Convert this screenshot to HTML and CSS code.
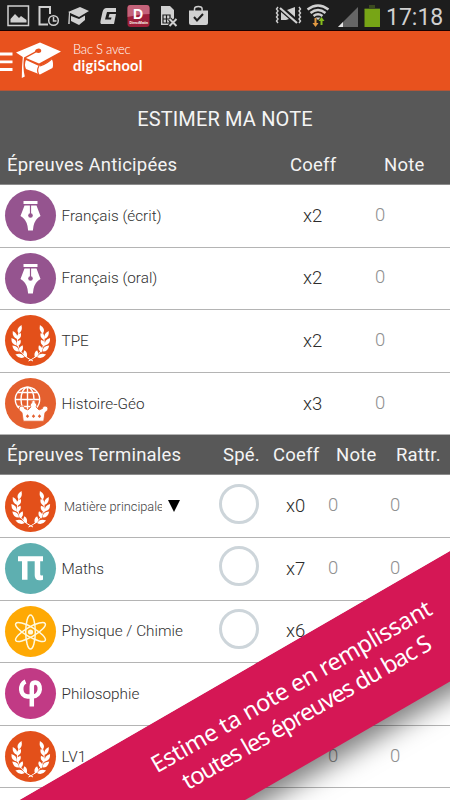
FILE: index.html
```
<!DOCTYPE html>
<html lang="fr">
<head>
    <meta charset="UTF-8">
    <meta name="viewport" content="width=device-width, initial-scale=1.0">
    <title>Bac S avec digiSchool</title>
    <link rel="stylesheet" href="styles.css">
</head>
<body>
    <!-- Shared subject icons -->
    <svg class="icon-defs" width="0" height="0">
        <symbol id="pen" viewBox="0 0 51 51">
            <path fill="#fff" d="M18.5 11h14v3h-14zM19.500 15.500h12l4 10.500q-5.500 3-7 10l-.6 4.500h-4.800l-.6-4.500q-1.500-7-7-10z"/>
            <path stroke="#95548f" stroke-width="1.200" d="M25.500 15v10"/>
            <circle cx="25.500" cy="25.500" r="2.300" fill="#95548f"/>
        </symbol>
        <symbol id="branch" viewBox="0 0 51 51" overflow="visible">
            <path fill="none" stroke="#fff" stroke-width="1" d="M14 18C10 27 13 39 28 46"/>
            <g fill="#fff">
                <path transform="translate(13.500 18.500) rotate(10)" d="M0 0Q4-3 1.500-9Q-4-4 0 0Z"/>
                <path transform="translate(12 24) rotate(-28)" d="M0 0Q3.500-4 0-9Q-3.500-4 0 0Z"/>
                <path transform="translate(12.500 25) rotate(14)" d="M0 0Q4-3.500 1.500-7.500Q-3.500-4 0 0Z"/>
                <path transform="translate(11.500 30.500) rotate(-34)" d="M0 0Q4-4 0-9Q-4-4 0 0Z"/>
                <path transform="translate(12 31.500) rotate(16)" d="M0 0Q4-3.500 1.500-7.500Q-3.500-4 0 0Z"/>
                <path transform="translate(14 36.500) rotate(-48)" d="M0 0Q4-4 0-9Q-4-4 0 0Z"/>
                <path transform="translate(15 37.500) rotate(8)" d="M0 0Q4-3.500 1.500-7.500Q-3.500-4 0 0Z"/>
                <path transform="translate(19.500 42) rotate(-74)" d="M0 0Q4-4 0-9.500Q-4-4 0 0Z"/>
                <path transform="translate(21.500 42.500) rotate(-28)" d="M0 0Q4-3.500 1.500-7.500Q-3.500-4 0 0Z"/>
            </g>
        </symbol>
        <symbol id="laurel" viewBox="0 0 51 51">
            <use href="#branch" width="51" height="51"/>
            <use href="#branch" width="51" height="51" transform="matrix(-1 0 0 1 51.500 0)"/>
        </symbol>
        <symbol id="globe" viewBox="0 0 51 51">
            <g fill="none" stroke="#fff" stroke-width="1.400">
                <circle cx="22.500" cy="21.500" r="12.200"/>
                <ellipse cx="22.500" cy="21.500" rx="6.500" ry="12.200"/>
                <path d="M22.500 9v25M10 21.500h25M12.500 14.500h20M12.500 28.500h20"/>
            </g>
            <path fill="#fff" stroke="#e4602f" stroke-width=".8" d="M18.300 43.200L17 34.500q-2.500-1-3-3.500 0-3 3-3 2.500 0 2.500 2.500l3.500 1.500 3-3q-1.500-2-.2-3.500l1-.5q-.7-2.500 1.700-2.700 2.400.2 1.700 2.700l1 .5q1.300 1.500-.2 3.500l3 3 3.500-1.500q0-2.500 2.500-2.500 3 0 3 3-.5 2.500-3 3.500l-1.300 8.700z"/>
            <path fill="#e4602f" d="M22.500 36.300l1.700 1.900-1.700 1.900-1.700-1.900zM28.500 36.300l1.700 1.900-1.700 1.900-1.700-1.900zM34.500 36.300l1.700 1.900-1.700 1.900-1.700-1.900z"/>
        </symbol>
        <symbol id="pi" viewBox="0 0 51 51">
            <path fill="#fff" d="M13 13.300h25v4.900h-2.800v13q0 1.800 2.800 1v4.500q-8.300 2.300-8.300-4.500v-14h-7.200v18.600h-5.500V18.200h-4z"/>
        </symbol>
        <symbol id="atom" viewBox="0 0 51 51">
            <g fill="none" stroke="#fff9df" stroke-width="1.500">
                <ellipse cx="25.500" cy="26" rx="4.800" ry="17"/>
                <ellipse cx="25.500" cy="26" rx="4.800" ry="17" transform="rotate(60 25.500 26)"/>
                <ellipse cx="25.500" cy="26" rx="4.800" ry="17" transform="rotate(120 25.500 26)"/>
            </g>
            <circle cx="25.500" cy="26" r="2.600" fill="#fff9df"/>
        </symbol>
        <symbol id="phi" viewBox="0 0 51 51">
            <path fill="none" stroke="#fff" stroke-width="4.500" d="M20.500 13.500c-6 2.500-6 14.500 2 15h5c9 0 9.500-14 2.500-14q-3.200 0-3.200 4v20"/>
        </symbol>
    </svg>

    <div class="screen">
        <div class="status-bar">
            <svg class="status-left" width="225" height="31" viewBox="0 0 225 31">
                <g fill="none" stroke="#d0d0d0" stroke-width="1.500">
                    <path d="M8 6h20.500v19.500H8z"/>
                    <path stroke-width="2" d="M50 14V7H39.500v17.500H48"/>
                    <circle cx="53.500" cy="20.500" r="4.800"/>
                    <path d="M53.500 17v4h3"/>
                    <path d="M194.500 11V9q0-2.500 3.800-2.500t3.800 2.500v2"/>
                </g>
                <g fill="#d0d0d0">
                    <path d="M10.500 22.500V19l4.500-5 4 4 2-2 5.500 4v2.500z"/>
                    <path d="M68 12l12-5 9 4-10 6zM71 16l8 3 6-3.500v4.500l-6 5-8-4zM70 13l-.3 11h-1.500l.8-12z"/>
                    <path d="M116 8v4h-9l-2 7.500h6l.5-2h-3l1-3.500h6.500l-2 10h-13q-1-1-.5-3l2-9q1-4 4-4z"/>
                    <path d="M161 6h9l4 4v8l-3 7h-10z"/>
                    <path d="M189 10.500h19V23q0 2-2 2h-15q-2 0-2-2z"/>
                </g>
                <path stroke="#1d1d1d" stroke-width="1.200" fill="none" d="M163 15h7v8h-7zM163 19h7M166.500 15v8"/>
                <path stroke="#1d1d1d" stroke-width="4" d="M169.500 19l7 7m0-7l-7 7"/>
                <path stroke="#d0d0d0" stroke-width="2" d="M169.500 19l7 7m0-7l-7 7"/>
                <path stroke="#1d1d1d" stroke-width="2" fill="none" d="M194 17l3 3.500 6-6.500"/>
                <rect x="127.500" y="5" width="22" height="22" rx="3" fill="#9d1f3a"/>
                <path fill="#c4637a" d="M127.500 17V8q0-3 3-3h16q3 0 3 3v6q-9 0-22 3z"/>
                <text class="app-letter" x="133" y="18.500">D</text>
                <text class="app-caption" x="129.500" y="24.200">DirectMatin</text>
            </svg>
            <svg class="status-right" width="110" height="31" viewBox="275 0 110 31">
                <g fill="none" stroke="#d0d0d0">
                    <path stroke-width="1.400" d="M278 7l-1.500 2 1.500 2-1.500 2 1.500 2-1.500 2 1.500 2-1.500 2 1.500 2M299 7l1.500 2-1.500 2 1.500 2-1.500 2 1.500 2-1.500 2 1.500 2-1.500 2"/>
                    <path stroke-width="2.200" d="M280 8l17 15"/>
                    <path stroke-width="2.400" d="M307.500 9.500q10.500-8 21 0M310.500 13q7.500-6 15 0M313.500 16q4.500-3.500 9 0"/>
                </g>
                <path fill="#d0d0d0" d="M281 12l8 7-3 1h-5zM287 10l8-3v10zM315.500 17.500h5L318 20z"/>
                <path fill="#e29a42" d="M314.500 18h2v5h2l-3 4-3-4h2z"/>
                <path fill="#86bd1d" d="M320.500 25h2v-4h2l-3-4-3 4h2z"/>
                <path fill="#666" d="M358 7v20h-20z"/>
                <path fill="#e4e4e4" d="M343 22v5h-5z"/>
                <path fill="#3b4a20" d="M369 5h6v3h5v2h-15.500V8h4.500z"/>
                <path fill="#77a516" d="M364.500 9H380v18h-15.500z"/>
            </svg>
            <span class="clock">17:18</span>
        </div>

        <div class="app-bar">
            <svg width="62" height="59" viewBox="0 0 62 59">
                <path stroke="#fff" stroke-width="2.800" d="M0 23h12.500M0 30.800h12.500M0 38.500h12.500"/>
                <path fill="#fff" d="M16 21.500L40 11.500l21 9-22 12-13-5.500 10-5.500q3 1 5-.5 1-3.500-2.500-3.500-3.500.5-3.500 3L24 26.500q-1.500 10 .8 19l-3 1.500q0-12 1-21z"/>
                <path fill="#fff" d="M26 29l13 6q8-3 12.500-7.500 2.500 4.500 1 9.500L40 43.500 26 38q-2-4.500 0-9z"/>
                <path fill="none" stroke="#e8521e" stroke-width="1.200" d="M39 35q-2.500 4-.5 8M40 35q8-3 12-7.500"/>
            </svg>
            <div class="brand">
                <span class="brand-light">Bac S avec</span>
                <span class="brand-bold">digiSchool</span>
            </div>
        </div>

        <h1>ESTIMER MA NOTE</h1>

        <div class="section-head early">
            <span>Épreuves Anticipées</span>
            <span>Coeff</span>
            <span>Note</span>
        </div>
        <div class="row early">
            <svg class="badge purple"><use href="#pen"/></svg>
            <span class="name">Français (écrit)</span>
            <span class="coeff">x2</span>
            <span class="note">0</span>
        </div>
        <div class="row early">
            <svg class="badge purple"><use href="#pen"/></svg>
            <span class="name">Français (oral)</span>
            <span class="coeff">x2</span>
            <span class="note">0</span>
        </div>
        <div class="row early">
            <svg class="badge orange"><use href="#laurel"/></svg>
            <span class="name">TPE</span>
            <span class="coeff">x2</span>
            <span class="note">0</span>
        </div>
        <div class="row early">
            <svg class="badge coral"><use href="#globe"/></svg>
            <span class="name">Histoire-Géo</span>
            <span class="coeff">x3</span>
            <span class="note">0</span>
        </div>

        <div class="section-head final">
            <span>Épreuves Terminales</span>
            <span>Spé.</span>
            <span>Coeff</span>
            <span>Note</span>
            <span>Rattr.</span>
        </div>
        <div class="row final">
            <svg class="badge orange"><use href="#laurel"/></svg>
            <span class="select"><span class="select-text">Matière principale</span><span class="arrow"></span></span>
            <span class="radio"></span>
            <span class="coeff">x0</span>
            <span class="note">0</span>
            <span class="note">0</span>
        </div>
        <div class="row final">
            <svg class="badge teal"><use href="#pi"/></svg>
            <span class="name">Maths</span>
            <span class="radio"></span>
            <span class="coeff">x7</span>
            <span class="note">0</span>
            <span class="note">0</span>
        </div>
        <div class="row final">
            <svg class="badge yellow"><use href="#atom"/></svg>
            <span class="name">Physique / Chimie</span>
            <span class="radio"></span>
            <span class="coeff">x6</span>
        </div>
        <div class="row final">
            <svg class="badge magenta"><use href="#phi"/></svg>
            <span class="name">Philosophie</span>
        </div>
        <div class="row final">
            <svg class="badge orange"><use href="#laurel"/></svg>
            <span class="name">LV1</span>
            <span></span>
            <span></span>
            <span class="note">0</span>
            <span class="note">0</span>
        </div>

        <div class="ribbon">
            <span class="ribbon-first">Estime ta note en remplissant</span>
            <span class="ribbon-second">toutes les épreuves du bac S</span>
        </div>
    </div>
</body>
</html>
```
FILE: styles.css
```
* {
    box-sizing: border-box;
}
body {
    margin: 0;
    font-family: Roboto, "Liberation Sans", sans-serif;
    background-color: #ffffff;
}
.icon-defs {
    position: absolute;
}
.screen {
    position: relative;
    width: 450px;
    height: 800px;
    overflow: hidden;
}
.status-bar {
    display: flex;
    height: 31px;
    background-color: #1d1d1d;
    border-bottom: 1px solid #180000;
}
.status-left {
    margin-right: 50px;
}
.clock {
    color: #d0d0d0;
    font-size: 23px;
    font-weight: 370;
    line-height: 35px;
    margin-left: 1px;
}
.app-letter {
    font: bold 14px "Liberation Sans", sans-serif;
    fill: #ffffff;
}
.app-caption {
    font: bold 3.4px "Liberation Sans", sans-serif;
    fill: #ffffff;
}
.app-bar {
    display: flex;
    height: 60px;
    background-color: #e8521e;
    border-bottom: 1px solid #b55536;
}
.brand {
    display: flex;
    flex-direction: column;
    padding: 11px 0 0 11px;
    font-family: Lato, sans-serif;
    color: #ffffff;
    line-height: 15.5px;
}
.brand-light {
    font-size: 13px;
    font-weight: 300;
    letter-spacing: -0.25px;
}
.brand-bold {
    font-size: 14.5px;
    font-weight: 700;
    letter-spacing: 0.3px;
}
h1 {
    margin: 0;
    height: 54px;
    background-color: #585858;
    color: #f4f4f4;
    font-size: 20px;
    font-weight: 400;
    line-height: 57px;
    letter-spacing: 0.15px;
    text-align: center;
}
.section-head {
    display: grid;
    height: 40px;
    padding-left: 7px;
    background-color: #585858;
    border-bottom: 1px solid #8c8c8c;
    color: #f4f4f4;
    font-size: 18.5px;
    line-height: 40px;
    letter-spacing: 0.2px;
    white-space: nowrap;
}
.section-head.early {
    grid-template-columns: 283px 94px 1fr;
}
.section-head.final {
    grid-template-columns: 216px 50px 63px 60px 1fr;
}
.row {
    display: grid;
    align-items: center;
    height: 62.6px;
    padding-left: 5px;
    border-bottom: 1px solid #b4b4b4;
    background-color: #ffffff;
    white-space: nowrap;
}
.row.early {
    grid-template-columns: 56.5px 241.5px 72px 1fr;
}
.row.final {
    grid-template-columns: 56.5px 157.5px 67px 42px 62px 1fr;
}
.badge {
    width: 51px;
    height: 51px;
    border-radius: 50%;
}
.purple {
    background-color: #95548f;
}
.orange {
    background-color: #e3501a;
}
.coral {
    background-color: #e4602f;
}
.teal {
    background-color: #5eafb0;
}
.yellow {
    background-color: #fea904;
}
.magenta {
    background-color: #c13a85;
}
.name {
    color: #303030;
    font-size: 15.3px;
    font-weight: 360;
}
.coeff {
    color: #2c2c2c;
    font-size: 18.5px;
    font-weight: 360;
}
.note {
    color: #909090;
    font-size: 18.5px;
    font-weight: 330;
    padding-bottom: 2px;
}
.select {
    display: flex;
    align-items: center;
    padding-left: 2.5px;
}
.select-text {
    width: 98px;
    overflow: hidden;
    color: #404040;
    font-size: 12.8px;
    font-weight: 360;
}
.arrow {
    margin-left: 6px;
    border-top: 12px solid #000000;
    border-left: 6.5px solid transparent;
    border-right: 6.5px solid transparent;
}
.radio {
    width: 40px;
    height: 40px;
    margin-bottom: 5px;
    border: 3.5px solid #cdd5da;
    border-radius: 50%;
}
/* Diagonal promo ribbon over the lower part of the list */
.ribbon {
    position: absolute;
    left: -67px;
    top: 850px;
    width: 784px;
    height: 113px;
    padding-top: 22px;
    display: flex;
    flex-direction: column;
    align-items: center;
    background-color: #d51755;
    box-shadow: 0 12px 26px rgba(0, 0, 0, 0.5);
    clip-path: inset(0 0 -80px 0);
    color: #ffffff;
    font-family: "Noto Sans", sans-serif;
    font-size: 23.5px;
    line-height: 30px;
    transform: rotate(-30.05deg);
    transform-origin: 0 0;
}
.ribbon-first {
    letter-spacing: -0.3px;
}
.ribbon-second {
    letter-spacing: -1.1px;
}
```
